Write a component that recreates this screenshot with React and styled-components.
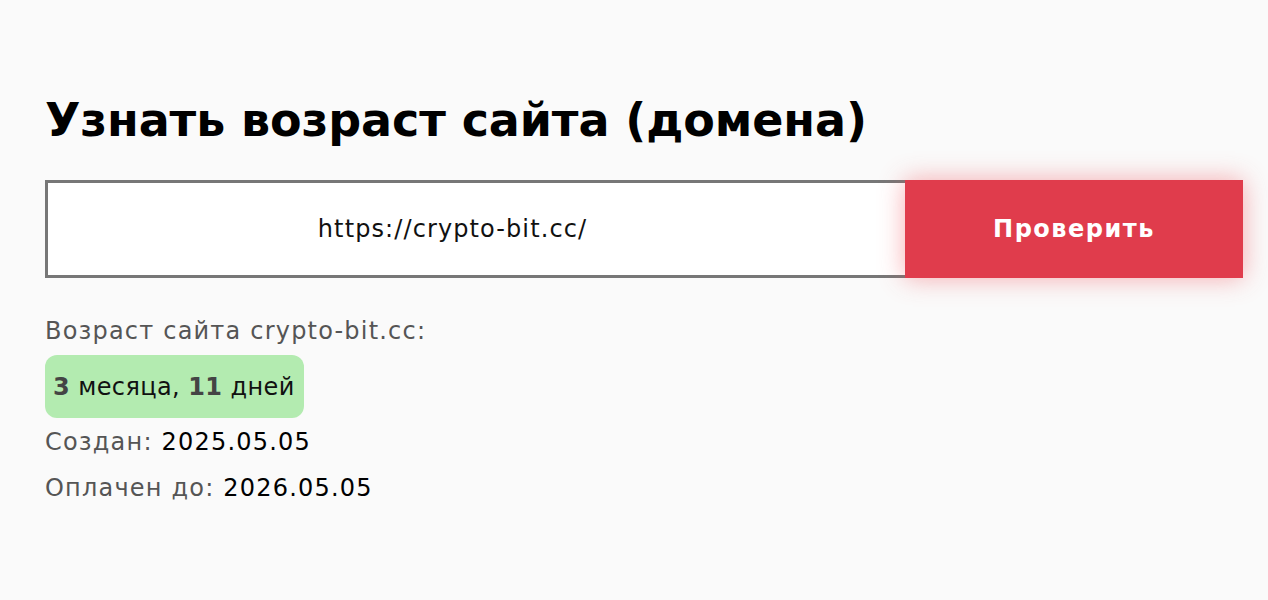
import React from 'react'
import styled, { createGlobalStyle } from 'styled-components'

const GlobalStyle = createGlobalStyle`
  html, body {
    margin: 0;
    padding: 0;
    background: #fafafa;
  }
  body {
    font-family: 'DejaVu Sans', 'Noto Sans', sans-serif;
    color: #111;
  }
`

const Page = styled.main`
  padding: 90px 25px 0 45px;
`

const Title = styled.h1`
  margin: 0 0 30px;
  font-size: 46px;
  line-height: 60px;
  font-weight: 700;
  color: #000;
  letter-spacing: -0.1px;
`

const Form = styled.form`
  display: flex;
  height: 98px;
  margin-bottom: 36px;
`

const Input = styled.input`
  flex: 1;
  box-sizing: border-box;
  height: 100%;
  border: 3px solid #777;
  border-right: none;
  background: #fff;
  font-family: inherit;
  font-size: 24px;
  letter-spacing: 1.1px;
  color: #111;
  text-align: center;
  padding: 0 48px 0 0;
  outline: none;
`

const Button = styled.button`
  width: 338px;
  height: 100%;
  border: none;
  background: #e03c4c;
  color: #fff;
  font-family: inherit;
  font-size: 24px;
  letter-spacing: 1.5px;
  font-weight: 700;
  box-shadow: 0 0 24px rgba(240, 70, 80, 0.45);
  cursor: pointer;
`

const Result = styled.section`
  display: flex;
  flex-direction: column;
  align-items: flex-start;
  font-size: 24px;
  letter-spacing: 1.2px;
`

const Line = styled.div`
  color: #555;
  line-height: 34px;
  margin-bottom: ${p => p.$gap || 0}px;
`

const Value = styled.span`
  color: #000;
`

const Badge = styled.div`
  background: #b3ebb0;
  border-radius: 12px;
  padding: 0 9px 0 8px;
  height: 63px;
  display: flex;
  align-items: center;
  font-size: 24px;
  letter-spacing: 0.4px;
  color: #111;
  margin: 7px 0 7px;
`

const Num = styled.b`
  color: #444;
  font-weight: 700;
`

export default function App() {
  return (
    <>
      <GlobalStyle />
      <Page>
        <Title>Узнать возраст сайта (домена)</Title>
        <Form onSubmit={e => e.preventDefault()}>
          <Input defaultValue="https://crypto-bit.cc/" />
          <Button type="submit">Проверить</Button>
        </Form>
        <Result>
          <Line>Возраст сайта crypto-bit.cc:</Line>
          <Badge>
            <Num>3</Num>&nbsp;месяца,&nbsp;<Num>11</Num>&nbsp;дней
          </Badge>
          <Line $gap={12}>
            Создан: <Value>2025.05.05</Value>
          </Line>
          <Line>
            Оплачен до: <Value>2026.05.05</Value>
          </Line>
        </Result>
      </Page>
    </>
  )
}
